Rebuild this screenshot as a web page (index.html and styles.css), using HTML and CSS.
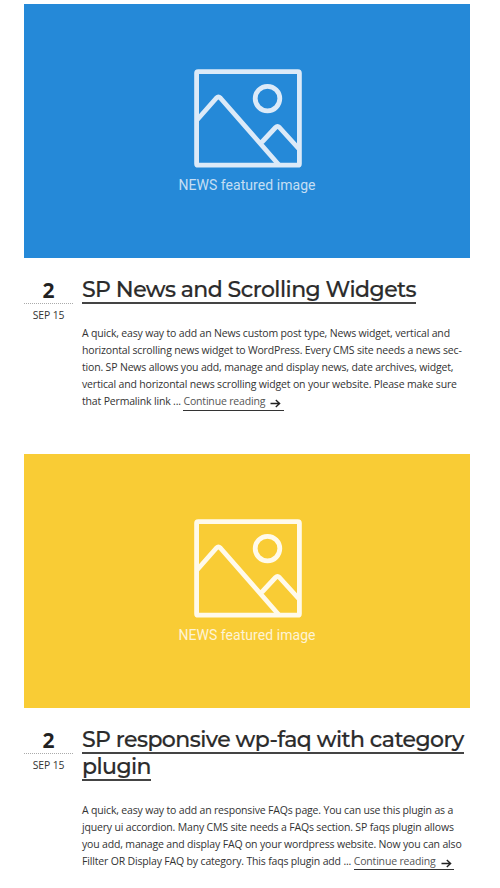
FILE: index.html
```html
<!DOCTYPE html>
<html lang="en">
<head>
<meta charset="utf-8">
<title>News</title>
<link rel="stylesheet" href="styles.css">
</head>
<body>
<main class="feed">
  <article class="post">
    <div class="featured blue">
      <svg class="picture" viewBox="0 0 108 99" fill="none" stroke="currentColor" stroke-width="4.8" stroke-linejoin="round">
        <rect x="2.6" y="2.6" width="102.8" height="93.6" rx="1.5"/>
        <path d="M3 51 22.4 29Q24.4 27 26.4 29L85 96M68 73 81.5 58.5Q83.5 56.5 85.5 58.5L105 80"/>
        <circle cx="73.5" cy="29.6" r="12.3"/>
      </svg>
      <span class="caption">NEWS featured image</span>
    </div>
    <div class="body">
      <div class="date"><b class="day">2</b><span class="month">SEP 15</span></div>
      <div class="content">
        <h2 class="title"><a>SP News and Scrolling Widgets</a></h2>
        <p class="excerpt">
          <span class="line">A quick, easy way to add an News custom post type, News widget, vertical and</span>
          <span class="line">horizontal scrolling news widget to WordPress. Every CMS site needs a news sec-</span>
          <span class="line">tion. SP News allows you add, manage and display news, date archives, widget,</span>
          <span class="line">vertical and horizontal news scrolling widget on your website. Please make sure</span>
          <span class="line">that Permalink link ... <a class="more">Continue reading<svg class="arrow" viewBox="0 0 11 9"><path d="M.5 4.5H9.6M5.8 1 9.6 4.5 5.8 8"/></svg></a></span>
        </p>
      </div>
    </div>
  </article>
  <article class="post">
    <div class="featured yellow">
      <svg class="picture" viewBox="0 0 108 99" fill="none" stroke="currentColor" stroke-width="4.8" stroke-linejoin="round">
        <rect x="2.6" y="2.6" width="102.8" height="93.6" rx="1.5"/>
        <path d="M3 51 22.4 29Q24.4 27 26.4 29L85 96M68 73 81.5 58.5Q83.5 56.5 85.5 58.5L105 80"/>
        <circle cx="73.5" cy="29.6" r="12.3"/>
      </svg>
      <span class="caption">NEWS featured image</span>
    </div>
    <div class="body">
      <div class="date"><b class="day">2</b><span class="month">SEP 15</span></div>
      <div class="content">
        <h2 class="title"><a>SP responsive wp-faq with category</a><br><a>plugin</a></h2>
        <p class="excerpt">
          <span class="line">A quick, easy way to add an responsive FAQs page. You can use this plugin as a</span>
          <span class="line">jquery ui accordion. Many CMS site needs a FAQs section. SP faqs plugin allows</span>
          <span class="line">you add, manage and display FAQ on your wordpress website. Now you can also</span>
          <span class="line">Fillter OR Display FAQ by category. This faqs plugin add ... <a class="more">Continue reading<svg class="arrow" viewBox="0 0 11 9"><path d="M.5 4.5H9.6M5.8 1 9.6 4.5 5.8 8"/></svg></a></span>
        </p>
      </div>
    </div>
  </article>
</main>
</body>
</html>
```
FILE: styles.css
```css
* { box-sizing: border-box; }
body { margin: 0; background: #fff; color: #333; font-family: "Open Sans", sans-serif; }
.feed { height: 888px; overflow: hidden; padding: 4px 30px 0 24px; }
.post { height: 450px; }
.featured { height: 254px; display: flex; flex-direction: column; align-items: center; padding-top: 65px; }
.blue { background: #2589d8; color: #dceaf8; }
.yellow { background: #f9cc35; color: #fffaeb; }
.picture { width: 108px; height: 99px; margin-left: 2px; display: block; }
.caption { font: 14px/18px Roboto, sans-serif; letter-spacing: .05px; margin-top: 8px; opacity: .88; white-space: nowrap; }
.body { display: flex; padding-top: 18px; }
.date { flex: none; width: 49px; margin-right: 9px; text-align: center; }
.day { display: block; height: 28px; border-bottom: 1px dotted #aaa; font: 700 21px/28px "Open Sans", sans-serif; color: #222; }
.month { display: block; font-size: 10.4px; line-height: 14px; margin-top: 4px; letter-spacing: -.1px; }
.content { flex: 1; min-width: 0; white-space: nowrap; }
.title { margin: 0; padding-top: 1px; font: 500 22px/27px Montserrat, Inter, sans-serif; letter-spacing: -.55px; color: #2b2b2b; -webkit-text-stroke: .2px; }
.title a { display: inline-block; height: 27px; line-height: 25px; vertical-align: top; border-bottom: 2px solid #444; }
.excerpt { margin: 20.6px 0 0; font-size: 10.5px; line-height: 17.2px; letter-spacing: -.17px; }
.line { display: block; height: 17.2px; }
.more { display: inline-block; height: 17.2px; border-bottom: 1px solid #333; padding-right: 2.5px; color: #555; }
.arrow { width: 11px; height: 9px; margin-left: 5px; vertical-align: -2.5px; fill: none; stroke: #222; stroke-width: 1.4; }
```
